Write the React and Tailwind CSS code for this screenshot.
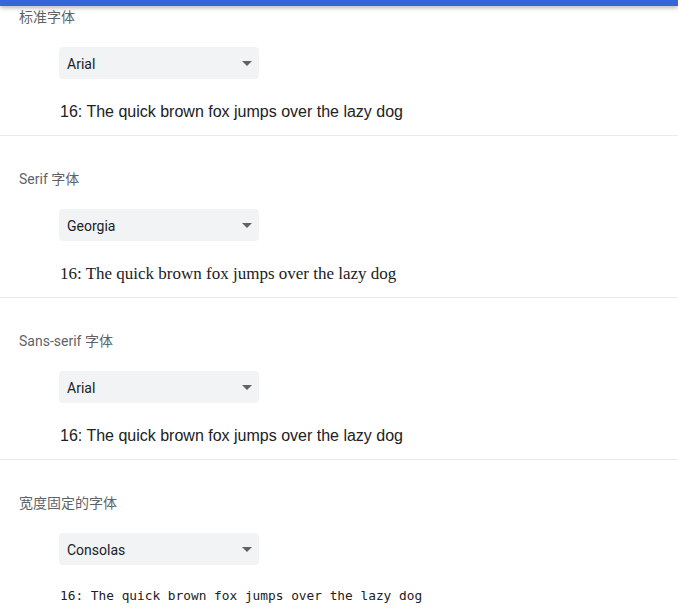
const sections = [
  {
    label: "标准字体",
    value: "Arial",
    sampleClass: "mt-[21px] font-['Liberation_Sans',Arial,sans-serif] text-[16px] leading-6",
  },
  {
    label: "Serif 字体",
    value: "Georgia",
    sampleClass: "mt-[21px] font-['Liberation_Serif',Georgia,serif] text-[17px] leading-6",
  },
  {
    label: "Sans-serif 字体",
    value: "Arial",
    sampleClass: "mt-[21px] font-['Liberation_Sans',Arial,sans-serif] text-[16px] leading-6",
  },
  {
    label: "宽度固定的字体",
    value: "Consolas",
    sampleClass: "mt-[19px] font-['DejaVu_Sans_Mono',monospace] text-[12.8px] leading-6",
  },
];

function FontSelect({ value }) {
  return (
    <div className="ml-[59px] mt-5 flex h-8 w-[200px] items-center justify-between rounded bg-[#f1f3f4] pl-2 pr-[7px] pt-[2px]">
      <span className="text-[14px] text-[#202124]">{value}</span>
      <svg width="10" height="5" viewBox="0 0 10 5" className="-mt-[1px]">
        <path d="M0 0 L10 0 L5 5 Z" fill="#5f6368" />
      </svg>
    </div>
  );
}

export default function App() {
  return (
    <div className="relative h-[614px] w-full overflow-hidden bg-white font-['Roboto','Noto_Sans_CJK_SC',sans-serif]">
      {/* header bar over the scrolled page */}
      <div className="absolute left-0 right-0 top-0 z-10 h-[6px] bg-[#3367d6] shadow-[0_2px_4px_rgba(0,0,0,0.28)]" />

      {sections.map((s, i) => (
        <div
          key={i}
          className={
            i === 0
              ? "pb-[11px] pt-[7px]"
              : "border-t border-[#e8eaed] pb-[11px] pt-[33px]"
          }
        >
          <div className="pl-[19px] text-[14px] leading-5 text-[#5f6368]">
            {s.label}
          </div>
          <FontSelect value={s.value} />
          <div className={`ml-[60px] text-[#202124] ${s.sampleClass}`}>
            16: The quick brown fox jumps over the lazy dog
          </div>
        </div>
      ))}
    </div>
  );
}
